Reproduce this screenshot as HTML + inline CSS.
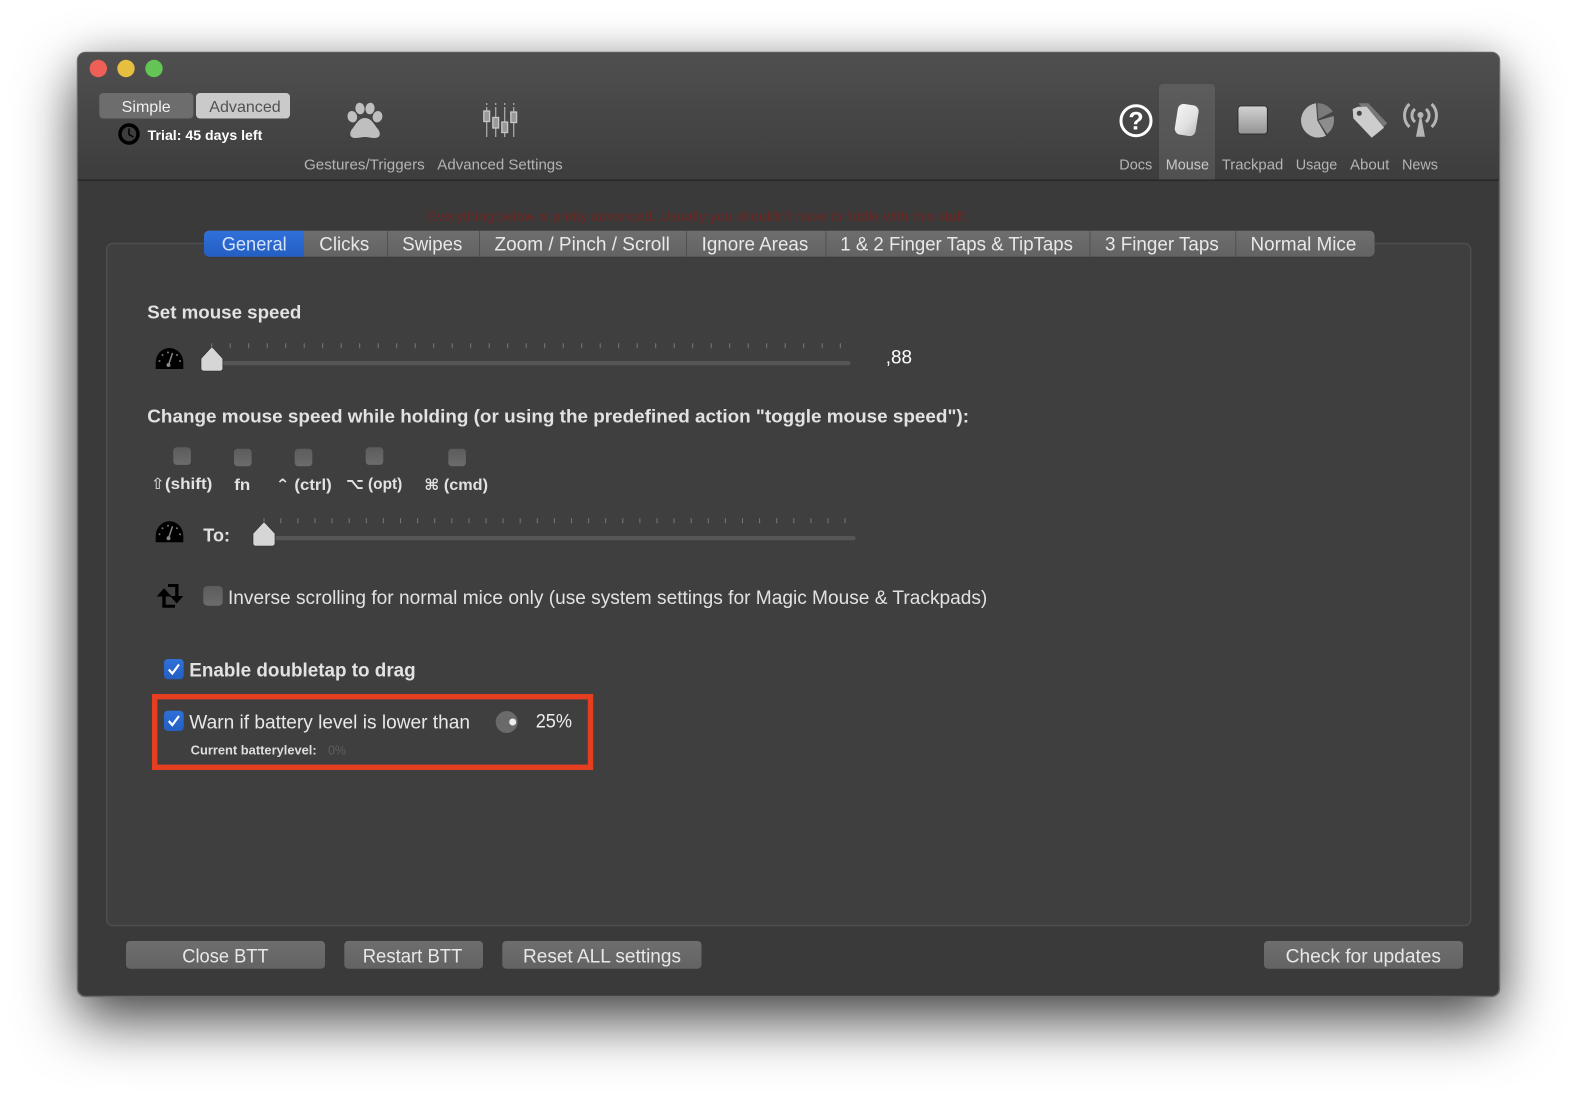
<!DOCTYPE html>
<html><head><meta charset="utf-8"><title>BTT</title>
<style>
html,body{margin:0;padding:0;background:#fff;width:1578px;height:1100px;overflow:hidden}
#win{position:absolute;left:77px;top:52px;width:1423px;height:945px;border-radius:8px;box-shadow:0 24px 58px rgba(0,0,0,.7),0 0 34px rgba(0,0,0,.12);background:#3b3a3b}
svg{position:absolute;left:0;top:0}
text{font-family:"Liberation Sans","DejaVu Sans",sans-serif;fill:#e2e2e2;font-size:19px}
.b{font-weight:bold}
.l{font-size:15px;fill:#b4b4b4}
.t{font-size:19px;fill:#e8e8e8}
.sym{font-family:"Liberation Sans","DejaVu Sans",sans-serif}
.dj{font-family:"DejaVu Sans",sans-serif}
</style></head><body>
<div id="win"></div>
<svg width="1578" height="1100" viewBox="0 0 1578 1100" xmlns="http://www.w3.org/2000/svg">
<defs>
<linearGradient id="tb" x1="0" y1="0" x2="0" y2="1"><stop offset="0" stop-color="#504f50"/><stop offset="1" stop-color="#3e3d3e"/></linearGradient>
<linearGradient id="tab" x1="0" y1="0" x2="0" y2="1"><stop offset="0" stop-color="#6e6e6e"/><stop offset="1" stop-color="#636363"/></linearGradient>
<linearGradient id="blue" x1="0" y1="0" x2="0" y2="1"><stop offset="0" stop-color="#2f70da"/><stop offset="1" stop-color="#245fc2"/></linearGradient>
<linearGradient id="cb" x1="0" y1="0" x2="0" y2="1"><stop offset="0" stop-color="#5c5c5c"/><stop offset="1" stop-color="#6c6c6c"/></linearGradient>
<linearGradient id="mouse" x1="0" y1="0" x2="1" y2="1"><stop offset="0" stop-color="#f4f4f4"/><stop offset=".6" stop-color="#e0e0e0"/><stop offset="1" stop-color="#bdbdbd"/></linearGradient>
<linearGradient id="pad" x1="0" y1="0" x2="0" y2="1"><stop offset="0" stop-color="#d2d2d2"/><stop offset="1" stop-color="#939393"/></linearGradient>
</defs>

<!-- window -->
<rect x="77.5" y="52.5" width="1422" height="944" rx="8" fill="#3b3a3b" stroke="#6a6a6a" stroke-width="1.5"/>
<path d="M78 60a7.500 7.500 0 0 1 7.500-7.500H1491.500a7.500 7.500 0 0 1 7.500 7.500V180H78Z" fill="url(#tb)"/>
<rect x="78" y="179.500" width="1421" height="1.500" fill="#272727"/>

<!-- traffic lights -->
<circle cx="98.300" cy="68.500" r="8.700" fill="#ee5f57"/>
<circle cx="126" cy="68.500" r="8.700" fill="#e6bf41"/>
<circle cx="154" cy="68.500" r="8.700" fill="#62c554"/>

<!-- simple / advanced -->
<rect x="99.300" y="93" width="94" height="25.500" rx="4" fill="#6d6d6d"/>
<rect x="196" y="93" width="94" height="25.500" rx="4" fill="#cacaca"/>
<text x="121.700" y="112" textLength="49" lengthAdjust="spacingAndGlyphs" font-size="16" style="font-size:16px;fill:#f0f0f0">Simple</text>
<text x="209.300" y="112" textLength="71.400" lengthAdjust="spacingAndGlyphs" style="font-size:16px;fill:#525252">Advanced</text>
<circle cx="129" cy="134" r="9" fill="#3e3d3e" stroke="#000" stroke-width="3.500"/>
<path d="M129 128.500V134.500L133.500 137" fill="none" stroke="#000" stroke-width="1.500"/>
<text class="b" x="147.700" y="140" textLength="114.600" lengthAdjust="spacingAndGlyphs" style="font-size:13.500px;fill:#fff">Trial: 45 days left</text>

<!-- paw -->
<g fill="#bfbfbf">
<ellipse cx="352.300" cy="116.700" rx="4.800" ry="5.800" transform="rotate(-15 352.300 116.700)"/>
<ellipse cx="360" cy="108.500" rx="4.600" ry="5.800" transform="rotate(-8 360 108.500)"/>
<ellipse cx="370" cy="108.500" rx="4.600" ry="5.800" transform="rotate(8 370 108.500)"/>
<ellipse cx="377.500" cy="116.700" rx="4.800" ry="5.800" transform="rotate(15 377.500 116.700)"/>
<path d="M365 118C359 118 356 124 353 128C349 132 349 138 355 138C359 138 362 137 365 137C368 137 371 138 375 138C381 138 381 132 377 128C374 124 371 118 365 118Z"/>
</g>

<!-- advanced settings icon -->
<g stroke="#a8a8a8" stroke-width="1.300" fill="#a8a8a8">
<path d="M486.700 103V137M495.700 103V137M504.700 103V137M513.700 103V137" stroke-dasharray="2 2 30"/>
<rect x="483.800" y="111" width="5.800" height="10.500" fill="#999" stroke="#c8c8c8"/>
<rect x="492.800" y="117.500" width="5.800" height="10.500" fill="#999" stroke="#c8c8c8"/>
<rect x="501.800" y="122" width="5.800" height="10.500" fill="#999" stroke="#c8c8c8"/>
<rect x="510.800" y="112" width="5.800" height="10.500" fill="#999" stroke="#c8c8c8"/>
</g>

<text class="l" x="304" y="169.300" textLength="120.700" lengthAdjust="spacingAndGlyphs">Gestures/Triggers</text>
<text class="l" x="437.300" y="169.300" textLength="125.400" lengthAdjust="spacingAndGlyphs">Advanced Settings</text>

<!-- right toolbar -->
<path d="M1159 88a4 4 0 0 1 4-4h48a4 4 0 0 1 4 4v91.500h-56Z" fill="#ffffff" fill-opacity=".1"/>
<circle cx="1136" cy="120.700" r="15" fill="none" stroke="#fff" stroke-width="3"/>
<text class="b" x="1136" y="129.500" text-anchor="middle" style="font-size:25px;fill:#fff">?</text>
<rect x="1176.200" y="104.500" width="21" height="31" rx="6" transform="rotate(9 1186.700 120)" fill="url(#mouse)"/>
<rect x="1238" y="106" width="29.300" height="28" rx="3" fill="url(#pad)" stroke="#222" stroke-width=".8"/>
<path d="M1317.300 120.500L1316 103.300A17.200 17.200 0 1 0 1326 135.700Z" fill="#bdbdbd"/>
<path d="M1318.300 119L1317.300 103.300A17.200 17.200 0 0 1 1332.700 111.700Z" fill="#7a7a7a"/>
<path d="M1318.500 120.500L1333.500 116A17.200 17.200 0 0 1 1327 134Z" fill="#8d8d8d"/>
<path d="M1358.300 103.300H1368.300L1387.300 123.300L1381 129Z" fill="#787878"/>
<path d="M1352.700 109L1358 106.700H1366.700L1384 127.700L1371.700 137.700L1353.300 118.300Z" fill="#cdcdcd"/>
<circle cx="1359.300" cy="113.300" r="2.500" fill="#444"/>
<g fill="none" stroke="#b5b5b5" stroke-width="3">
<path d="M1409.400 104A16 16 0 0 0 1409.400 127M1431.600 104A16 16 0 0 1 1431.600 127"/>
<path d="M1415 109A8.500 8.500 0 0 0 1415 122M1426 109A8.500 8.500 0 0 1 1426 122"/>
</g>
<path d="M1420.500 113L1416 136.700H1425Z" fill="#b5b5b5"/>
<circle cx="1420.500" cy="115" r="3" fill="#b5b5b5"/>

<text class="l" x="1119.300" y="169.300" textLength="33" lengthAdjust="spacingAndGlyphs">Docs</text>
<text class="l" x="1165.700" y="169.300" textLength="43.300" lengthAdjust="spacingAndGlyphs" style="fill:#c8c8c8">Mouse</text>
<text class="l" x="1221.700" y="169.300" textLength="61.600" lengthAdjust="spacingAndGlyphs">Trackpad</text>
<text class="l" x="1295.700" y="169.300" textLength="41.600" lengthAdjust="spacingAndGlyphs">Usage</text>
<text class="l" x="1350" y="169.300" textLength="39.300" lengthAdjust="spacingAndGlyphs">About</text>
<text class="l" x="1402" y="169.300" textLength="36" lengthAdjust="spacingAndGlyphs">News</text>

<!-- red warning -->
<text x="427.500" y="221" textLength="540.500" lengthAdjust="spacingAndGlyphs" style="font-size:13.500px;fill:#6b2521">Everything below is pretty advanced. Usually you shouldn't have to fiddle with this stuff.</text>

<!-- panel -->
<rect x="106.700" y="243.500" width="1364" height="682" rx="6" fill="#403f40" stroke="#4f4e4f" stroke-width="1.500"/>

<!-- tabs -->
<rect x="204" y="231" width="1170.600" height="27" rx="5" fill="#3a3a3a"/>
<rect x="204" y="230.700" width="1170.600" height="26" rx="5" fill="url(#tab)"/>
<path d="M209 230.700H304V256.700H209a5 5 0 0 1-5-5V235.700a5 5 0 0 1 5-5Z" fill="url(#blue)"/>
<g fill="#505050"><rect x="387" y="230.700" width="1" height="26"/><rect x="479" y="230.700" width="1" height="26"/><rect x="686" y="230.700" width="1" height="26"/><rect x="825.500" y="230.700" width="1" height="26"/><rect x="1089.500" y="230.700" width="1" height="26"/><rect x="1235.300" y="230.700" width="1" height="26"/></g>
<text class="t" x="221.700" y="250.700" textLength="65" lengthAdjust="spacingAndGlyphs" style="fill:#d5e4fb">General</text>
<text class="t" x="319.300" y="250.700" textLength="50" lengthAdjust="spacingAndGlyphs">Clicks</text>
<text class="t" x="402.300" y="250.700" textLength="60" lengthAdjust="spacingAndGlyphs">Swipes</text>
<text class="t" x="494.500" y="250.700" textLength="175.300" lengthAdjust="spacingAndGlyphs">Zoom / Pinch / Scroll</text>
<text class="t" x="701.600" y="250.700" textLength="106.700" lengthAdjust="spacingAndGlyphs">Ignore Areas</text>
<text class="t" x="840.300" y="250.700" textLength="232.600" lengthAdjust="spacingAndGlyphs">1 &amp; 2 Finger Taps &amp; TipTaps</text>
<text class="t" x="1105" y="250.700" textLength="113.800" lengthAdjust="spacingAndGlyphs">3 Finger Taps</text>
<text class="t" x="1250.500" y="250.700" textLength="105.800" lengthAdjust="spacingAndGlyphs">Normal Mice</text>

<!-- set mouse speed -->
<text class="b" x="147.300" y="318.300" textLength="154" lengthAdjust="spacingAndGlyphs" style="font-size:18.500px">Set mouse speed</text>
<g id="g1">
<path d="M155.700 369V362.500A13.800 14.500 0 0 1 183.300 362.500V369Z" fill="#000"/>
<path d="M168.500 365L172.500 353" stroke="#888" stroke-width="1.500"/><circle cx="168.500" cy="365" r="2" fill="#888"/>
<g fill="#777"><circle cx="159.500" cy="361" r="1"/><circle cx="162.500" cy="355" r="1"/><circle cx="168" cy="352.500" r="1"/><circle cx="177" cy="355" r="1"/><circle cx="180" cy="361" r="1"/></g>
</g>
<rect x="222" y="361" width="628.500" height="4.300" rx="2" fill="#565656"/>
<path d="M211.900 346.700L222.800 358.500V368.500a2.500 2.500 0 0 1-2.500 2.500H203.500a2.500 2.500 0 0 1-2.500-2.500V358.500Z" fill="#d6d6d6" stroke="#2a2a2a" stroke-width=".6"/>
<path d="M211.700 343.300V348.300" stroke="#777"/>
<path d="M230.200 343.300v5M248.700 343.300v5M267.200 343.300v5M285.700 343.300v5M304.200 343.300v5M322.700 343.300v5M341.200 343.300v5M359.700 343.300v5M378.200 343.300v5M396.700 343.300v5M415.200 343.300v5M433.700 343.300v5M452.200 343.300v5M470.700 343.300v5M489.200 343.300v5M507.700 343.300v5M526.200 343.300v5M544.700 343.300v5M563.200 343.300v5M581.700 343.300v5M600.200 343.300v5M618.700 343.300v5M637.200 343.300v5M655.700 343.300v5M674.200 343.300v5M692.700 343.300v5M711.200 343.300v5M729.700 343.300v5M748.200 343.300v5M766.700 343.300v5M785.200 343.300v5M803.700 343.300v5M822.200 343.300v5M840.300 343.300v5" stroke="#777" stroke-width="1"/>
<text x="885.800" y="363.300" textLength="26.200" lengthAdjust="spacingAndGlyphs" style="font-size:19px;fill:#fff">,88</text>

<!-- change speed -->
<text class="b" x="147.300" y="422.300" textLength="821.700" lengthAdjust="spacingAndGlyphs" style="font-size:18.500px">Change mouse speed while holding (or using the predefined action "toggle mouse speed"):</text>
<g fill="url(#cb)">
<rect x="173.300" y="447.300" width="17.600" height="17.600" rx="3.500"/>
<rect x="234" y="448.700" width="17.600" height="17.600" rx="3.500"/>
<rect x="294.700" y="448.700" width="17.600" height="17.600" rx="3.500"/>
<rect x="365.700" y="447.300" width="17.600" height="17.600" rx="3.500"/>
<rect x="448.300" y="448.700" width="17.600" height="17.600" rx="3.500"/>
</g>
<g>
<text x="150.700" y="489" textLength="61.600" lengthAdjust="spacingAndGlyphs" style="font-size:15.500px;font-weight:bold"><tspan class="dj" style="font-weight:normal">⇧</tspan>(shift)</text>
<text x="234.300" y="490" textLength="16" lengthAdjust="spacingAndGlyphs" style="font-size:15.500px;font-weight:bold">fn</text>
<text x="275.700" y="490" textLength="56" lengthAdjust="spacingAndGlyphs" style="font-size:15.500px;font-weight:bold"><tspan class="dj">⌃</tspan> (ctrl)</text>
<text x="346" y="489" textLength="56.300" lengthAdjust="spacingAndGlyphs" style="font-size:15.500px;font-weight:bold"><tspan class="dj">⌥</tspan> (opt)</text>
<text x="424.300" y="490" textLength="63.700" lengthAdjust="spacingAndGlyphs" style="font-size:15.500px;font-weight:bold"><tspan class="dj">⌘</tspan> (cmd)</text>
</g>
<path d="M155.700 542.300V535.800A13.800 14.500 0 0 1 183.300 535.800V542.300Z" fill="#000"/>
<path d="M168.500 538.300L172.500 526.300" stroke="#888" stroke-width="1.500"/><circle cx="168.500" cy="538.300" r="2" fill="#888"/>
<g fill="#777"><circle cx="159.500" cy="534.300" r="1"/><circle cx="162.500" cy="528.300" r="1"/><circle cx="168" cy="525.800" r="1"/><circle cx="177" cy="528.300" r="1"/><circle cx="180" cy="534.300" r="1"/></g>
<text class="b" x="203.300" y="541.700" textLength="26.700" lengthAdjust="spacingAndGlyphs" style="font-size:18px">To:</text>
<rect x="274" y="536" width="581.500" height="4.300" rx="2" fill="#565656"/>
<path d="M264 521.700L275 533.500V543.500a2.500 2.500 0 0 1-2.500 2.500H255.500a2.500 2.500 0 0 1-2.500-2.500V533.500Z" fill="#d6d6d6" stroke="#2a2a2a" stroke-width=".6"/>
<path d="M264 518.300v5M280.800 518.300v5M297.900 518.300v5M315 518.300v5M332.100 518.300v5M349.200 518.300v5M366.300 518.300v5M383.400 518.300v5M400.500 518.300v5M417.600 518.300v5M434.700 518.300v5M451.800 518.300v5M468.900 518.300v5M486 518.300v5M503.100 518.300v5M520.200 518.300v5M537.300 518.300v5M554.400 518.300v5M571.500 518.300v5M588.600 518.300v5M605.700 518.300v5M622.800 518.300v5M639.900 518.300v5M657 518.300v5M674.100 518.300v5M691.200 518.300v5M708.300 518.300v5M725.400 518.300v5M742.500 518.300v5M759.600 518.300v5M776.700 518.300v5M793.800 518.300v5M810.900 518.300v5M828 518.300v5M845 518.300v5" stroke="#777" stroke-width="1"/>

<!-- inverse scrolling -->
<path d="M164 588.300L156.700 596.500H162.300V607.700H175V604.700H165.700V596.500H171.700Z" fill="#000"/>
<path d="M168 584H178.500V596H183.300L176.700 603.500L170 596H175.200V587H168Z" fill="#000"/>
<rect x="203.300" y="586" width="19.400" height="19.700" rx="4" fill="url(#cb)"/>
<text x="228" y="604" textLength="759.300" lengthAdjust="spacingAndGlyphs" style="font-size:19px;fill:#e2e2e2">Inverse scrolling for normal mice only (use system settings for Magic Mouse &amp; Trackpads)</text>

<!-- enable doubletap -->
<rect x="164" y="659" width="19.700" height="20.300" rx="4" fill="url(#blue)"/>
<path d="M168.800 669.500L172.300 673.500L179 664.500" fill="none" stroke="#fff" stroke-width="2.200"/>
<text class="b" x="189.300" y="676.700" textLength="226.400" lengthAdjust="spacingAndGlyphs" style="font-size:19px">Enable doubletap to drag</text>

<!-- battery -->
<rect x="154.700" y="696.700" width="435.800" height="70.600" fill="none" stroke="#e63e20" stroke-width="5.400"/>
<rect x="164" y="710.700" width="19.700" height="20.300" rx="4" fill="url(#blue)"/>
<path d="M168.800 721L172.300 725L179 716" fill="none" stroke="#fff" stroke-width="2.200"/>
<text x="189.300" y="728.300" textLength="280.700" lengthAdjust="spacingAndGlyphs" style="font-size:19px;fill:#e8e8e8">Warn if battery level is lower than</text>
<circle cx="506.700" cy="722" r="11" fill="#6a6a6a"/>
<circle cx="512.700" cy="722" r="3.500" fill="#eee"/>
<text x="535.700" y="727.300" textLength="36.300" lengthAdjust="spacingAndGlyphs" style="font-size:19px;fill:#eee">25%</text>
<text class="b" x="190.700" y="754.300" textLength="126" lengthAdjust="spacingAndGlyphs" style="font-size:12.500px;fill:#dedede">Current batterylevel:</text>
<text x="328" y="754.300" textLength="18" lengthAdjust="spacingAndGlyphs" style="font-size:12.500px;fill:#5e5e5e">0%</text>

<!-- bottom buttons -->
<g fill="url(#tab)">
<rect x="126" y="941" width="199" height="27.700" rx="4"/>
<rect x="344.300" y="941" width="138.700" height="27.700" rx="4"/>
<rect x="502.300" y="941" width="199.200" height="27.700" rx="4"/>
<rect x="1264" y="941" width="199" height="27.700" rx="4"/>
</g>
<text class="t" x="182.300" y="962.300" textLength="86.300" lengthAdjust="spacingAndGlyphs">Close BTT</text>
<text class="t" x="362.700" y="962.300" textLength="99.700" lengthAdjust="spacingAndGlyphs">Restart BTT</text>
<text class="t" x="523" y="962.300" textLength="158" lengthAdjust="spacingAndGlyphs">Reset ALL settings</text>
<text class="t" x="1285.700" y="962.300" textLength="155.300" lengthAdjust="spacingAndGlyphs">Check for updates</text>
</svg>
</body></html>
